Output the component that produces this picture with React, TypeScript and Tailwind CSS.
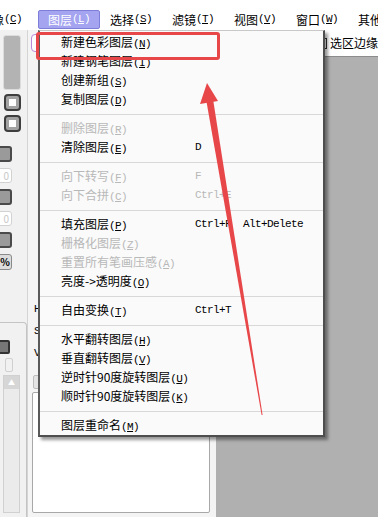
import React from "react";

type Item =
    | { sep: true }
    | { label: string; key: string; shortcut?: string; disabled?: boolean };

const items: Item[] = [
    { label: "新建色彩图层", key: "N" },
    { label: "新建钢笔图层", key: "I" },
    { label: "创建新组", key: "S" },
    { label: "复制图层", key: "D" },
    { sep: true },
    { label: "删除图层", key: "R", disabled: true },
    { label: "清除图层", key: "E", shortcut: "D" },
    { sep: true },
    { label: "向下转写", key: "F", shortcut: "F", disabled: true },
    { label: "向下合拼", key: "C", shortcut: "Ctrl+E", disabled: true },
    { sep: true },
    { label: "填充图层", key: "P", shortcut: "Ctrl+F  Alt+Delete" },
    { label: "栅格化图层", key: "Z", disabled: true },
    { label: "重置所有笔画压感", key: "A", disabled: true },
    { label: "亮度->透明度", key: "O" },
    { sep: true },
    { label: "自由变换", key: "T", shortcut: "Ctrl+T" },
    { sep: true },
    { label: "水平翻转图层", key: "H" },
    { label: "垂直翻转图层", key: "V" },
    { label: "逆时针90度旋转图层", key: "U" },
    { label: "顺时针90度旋转图层", key: "K" },
    { sep: true },
    { label: "图层重命名", key: "M" },
];

const menus = [
    { label: "像", key: "C" },
    { label: "图层", key: "L", active: true },
    { label: "选择", key: "S" },
    { label: "滤镜", key: "T" },
    { label: "视图", key: "V" },
    { label: "窗口", key: "W" },
    { label: "其他", key: "O" },
];

const mono = "font-['Liberation_Mono',monospace] text-[11px] tracking-[-0.6px]";

function Mnemonic({ k }: { k: string }) {
    return (
        <span className={mono}>
            (<span className="underline underline-offset-1">{k}</span>)
        </span>
    );
}

function DarkButton() {
    return (
        <div className="flex h-[17px] w-[17px] items-center justify-center rounded-sm border-2 border-[#3e3e3e] bg-[#a2a2a2]">
            <div className="h-[7px] w-[7px] bg-white" />
        </div>
    );
}

function SpinDark() {
    return <div className="ml-[-6px] h-[16px] w-[18px] rounded-[3px] border-2 border-[#4a4a4a] bg-[#9a9a9a]" />;
}

function SpinLight() {
    return (
        <div className="ml-[-6px] flex h-[15px] w-[18px] items-center justify-end rounded-[3px] border border-[#d2d2d2] bg-white pr-[2px] text-[10px] leading-none text-[#c8c8c8]">
            0
        </div>
    );
}

export default function App() {
    return (
        <div className="relative h-[522px] w-[378px] overflow-hidden bg-white font-['Noto_Sans_CJK_SC',sans-serif] text-[12px] text-black">
            <div className="h-[8px]" />
            {/* menubar */}
            <div className="flex h-[22px] items-start pt-[2px] ml-[-24px]">
                {menus.map((m) => (
                    <div
                        key={m.label}
                        className={
                            "flex h-[19px] w-[62px] shrink-0 items-center justify-center whitespace-nowrap leading-none " +
                            (m.active ? "rounded-[2px] border border-[#7e7ed8] bg-[#a4a4f0] text-white" : "")
                        }
                    >
                        {m.label}
                        <Mnemonic k={m.key} />
                    </div>
                ))}
            </div>

            {/* body */}
            <div className="flex h-[487px]">
                {/* tool column */}
                <div className="flex w-[28px] shrink-0 flex-col border-r border-[#d4d4d4] bg-[#f1f1f1]">
                    <div className="ml-[3px] mt-[5px] h-[55px] w-[18px] rounded-[3px] border border-[#dcdcdc] bg-[#b3b3b3]" />
                    <div className="ml-[4px] mt-[4px] flex flex-col gap-[4px]">
                        <DarkButton />
                        <DarkButton />
                    </div>
                    <div className="mt-[14px] flex flex-col gap-[6px]">
                        <SpinDark />
                        <SpinLight />
                        <SpinDark />
                        <SpinLight />
                        <SpinDark />
                        <div className="ml-[-6px] flex h-[16px] w-[18px] items-center justify-end rounded-[3px] border border-[#8a8a8a] bg-[#dcdcdc] pr-[1px] text-[10px] leading-none font-bold">
                            %
                        </div>
                    </div>
                    <div className="mt-[52px] flex flex-1 flex-col rounded-tr-[4px] border-r border-t border-[#c4c4c4]">
                        <div className="ml-[-6px] mt-[17px] h-[14px] w-[16px] rounded-[2px] border-2 border-[#333] bg-[#777]" />
                        <div className="ml-[5px] mt-[4px] h-[14px] w-[8px] rounded-[2px] border border-[#d0d0d0]" />
                        <div className="mt-[3px] ml-[3px] flex w-[17px] flex-1 flex-col border border-[#d0d0d0] bg-[#ebebeb] mb-[4px]">
                            <div className="flex h-[13px] items-center justify-center bg-[#d6d6d6] text-[7px] leading-none text-white">
                                ▲
                            </div>
                        </div>
                    </div>
                </div>

                {/* layer panel */}
                <div className="flex w-[188px] shrink-0 flex-col bg-[#f4f4f4]">
                    <div className="ml-[3px] mt-[4px] h-[18px] w-[24px] rounded-[4px] border border-[#b88ad8] bg-white" />
                    <div className="ml-[6px] mt-[250px] flex flex-col gap-[7px] text-[11px] leading-[15px] font-['Liberation_Mono',monospace]">
                        <span>H</span>
                        <span>S</span>
                        <span>V</span>
                    </div>
                    <div className="ml-[5px] mt-[14px] h-[14px] w-[30px] rounded-[2px] border border-[#bdbdbd] bg-[#e4e4e4]" />
                    <div className="mb-[4px] ml-[4px] mr-[6px] mt-[3px] flex-1 rounded-[2px] border border-[#a8a8a8] bg-white" />
                </div>

                {/* canvas side */}
                <div className="flex flex-1 flex-col">
                    <div className="flex h-[27px] items-center border-b border-[#8c8c8c] bg-white pl-[108px] whitespace-nowrap">
                        <div className="mr-[3px] h-[11px] w-[3px] border-y border-r border-[#333]" />
                        <span className="leading-none">选区边缘</span>
                    </div>
                    <div className="flex-1 bg-[#b0b0b0]" />
                </div>
            </div>

            {/* dropdown menu */}
            <div className="absolute left-[38px] top-[30px] w-[287px] border border-[#c8c8c8] border-l-2 border-l-[#5a5a5a] border-r-2 border-r-[#4e4e4e] border-b-2 border-b-[#4e4e4e] bg-[#fafafa] pt-[2px] shadow-[3px_3px_3px_rgba(0,0,0,0.4)]">
                {items.map((it, i) =>
                    "sep" in it ? (
                        <div key={i} className="flex h-[10px] items-center">
                            <div className="h-px w-full bg-[#d8d8d8]" />
                        </div>
                    ) : (
                        <div
                            key={i}
                            className={"flex h-[19px] items-center pl-[21px] leading-none " + (it.disabled ? "text-[#b8b8b8]" : "text-black")}
                        >
                            <div className="w-[134px] shrink-0 whitespace-nowrap">
                                {it.label}
                                <Mnemonic k={it.key} />
                            </div>
                            {it.shortcut && <div className={mono + " whitespace-pre"}>{it.shortcut}</div>}
                        </div>
                    )
                )}
            </div>

            {/* annotation */}
            <div className="absolute left-[36px] top-[32px] h-[28px] w-[184px] rounded-[3px] border-[3px] border-[#e8474a]" />
            <svg className="absolute inset-0" width="378" height="522" viewBox="0 0 378 522">
                <polygon points="206,99 213,99 262.6,415 261.6,415" fill="#e8474a" />
                <polygon points="207,83 200,104 218,101" fill="#e8474a" />
            </svg>
        </div>
    );
}
